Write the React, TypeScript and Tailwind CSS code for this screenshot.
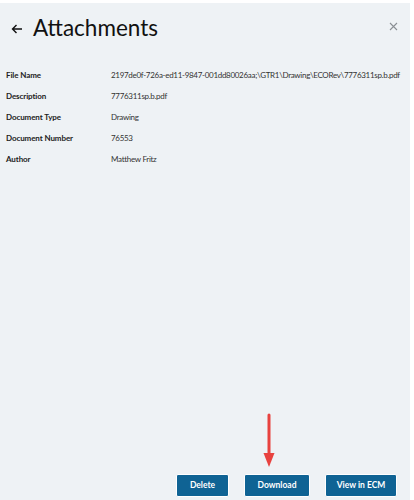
import React from "react"

const rows: { label: string; value: string }[] = [
	{ label: "File Name", value: "2197de0f-726a-ed11-9847-001dd80026aa;\\GTR1\\Drawing\\ECORev\\7776311sp.b.pdf" },
	{ label: "Description", value: "7776311sp.b.pdf" },
	{ label: "Document Type", value: "Drawing" },
	{ label: "Document Number", value: "76553" },
	{ label: "Author", value: "Matthew Fritz" },
]

const App: React.FC = () => {
	return (
		<div className="w-[414px] h-[500px] bg-white pt-[3px] pr-[4px] overflow-hidden">
			<div
				className="relative flex flex-col h-full bg-[#eef2f5]"
				style={{ fontFamily: "Lato, 'Open Sans', sans-serif" }}
			>
				{/* Header */}
				<div className="flex items-center h-[50px] pl-[11px] pr-[10px]">
					<svg width="12" height="12" viewBox="0 0 12 12" className="mr-[10px] mt-[1px]">
						<path d="M11 6H1.5M5.5 2L1.5 6l4 4" fill="none" stroke="#111" strokeWidth="1.4" />
					</svg>
					<h1 className="text-[22.5px] leading-none text-[#111] flex-grow">Attachments</h1>
					<svg width="9" height="9" viewBox="0 0 9 9" className="mr-[2px] mt-[-4px]">
						<path d="M1 1l7 7M8 1L1 8" stroke="#8a8f94" strokeWidth="1.1" />
					</svg>
				</div>

				{/* Details */}
				<div className="flex flex-col mt-[11px] pl-[6px]">
					{rows.map((row) => (
						<div key={row.label} className="flex items-center h-[21px] text-[8px]">
							<span className="w-[105px] shrink-0 font-bold text-[#222] tracking-[-0.1px]">
								{row.label}
							</span>
							<span className="text-[#333] whitespace-nowrap tracking-[-0.3px]">{row.value}</span>
						</div>
					))}
				</div>

				<div className="flex-grow" />

				{/* Annotation arrow */}
				<svg width="14" height="56" viewBox="0 0 14 56" className="absolute left-[262px] top-[409px]">
					<path d="M7 3V44" stroke="#e8423f" strokeWidth="3" strokeLinecap="round" />
					<path d="M1.5 41L7 55L12.5 41Z" fill="#e8423f" />
				</svg>

				{/* Actions */}
				<div className="flex justify-end gap-[15px] pr-[13px] pb-[3px]">
					<button className="w-[53px] h-[23px] rounded-[2px] border border-white bg-[#0f6394] text-white text-[8.5px] font-bold">
						Delete
					</button>
					<button className="w-[66px] h-[23px] rounded-[2px] border border-white bg-[#0f6394] text-white text-[8.5px] font-bold">
						Download
					</button>
					<button className="w-[72px] h-[23px] rounded-[2px] border border-white bg-[#0f6394] text-white text-[8.5px] font-bold">
						View in ECM
					</button>
				</div>
			</div>
		</div>
	)
}

export default App
